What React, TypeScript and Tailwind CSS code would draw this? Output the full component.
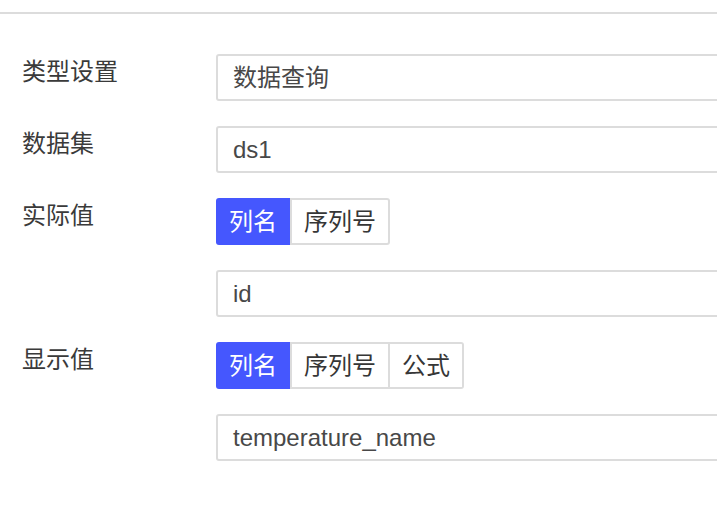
import React from 'react'

const font = { fontFamily: '"Liberation Sans", Arial, "Noto Sans CJK SC", sans-serif' }

function Field({ value }: { value: string }) {
  return (
    <div className="h-[47px] border-2 border-[#dcdcdc] rounded-[3px] bg-white flex items-center pl-[15px] text-[24px] text-[#484848]">
      {value}
    </div>
  )
}

function Segments({ items, active }: { items: string[]; active: number }) {
  return (
    <div className="flex h-[47px]">
      {items.map((item, i) => (
        <div
          key={item}
          className={
            'flex items-center text-[24px] ' +
            (i === 0 ? 'rounded-l-[3px] ' : '') +
            (i === items.length - 1 ? 'rounded-r-[3px] ' : '') +
            (i === active
              ? 'bg-[#4557fe] text-white px-[13px]'
              : 'bg-white text-[#363636] px-[12px] border-2 border-[#dcdcdc] ' + (i > 1 ? 'border-l-0' : ''))
          }
        >
          {item}
        </div>
      ))}
    </div>
  )
}

function Row({ label, children }: { label: string; children: React.ReactNode }) {
  return (
    <div className="flex">
      <div className="w-[216px] pl-[22px] text-[24px] leading-[36px] text-[#3a3a3a]">{label}</div>
      <div className="flex-1 flex flex-col gap-[25px]">{children}</div>
    </div>
  )
}

export default function App() {
  return (
    <div className="w-full h-[532px] overflow-hidden bg-white" style={font}>
      <div className="w-[780px]">
        <div className="mt-[12px] border-t-2 border-[#dcdcdc]" />
        <div className="mt-[40px] flex flex-col gap-[25px]">
          <Row label="类型设置">
            <Field value="数据查询" />
          </Row>
          <Row label="数据集">
            <Field value="ds1" />
          </Row>
          <Row label="实际值">
            <div className="flex">
              <Segments items={['列名', '序列号']} active={0} />
            </div>
            <Field value="id" />
          </Row>
          <Row label="显示值">
            <div className="flex">
              <Segments items={['列名', '序列号', '公式']} active={0} />
            </div>
            <Field value="temperature_name" />
          </Row>
        </div>
      </div>
    </div>
  )
}
